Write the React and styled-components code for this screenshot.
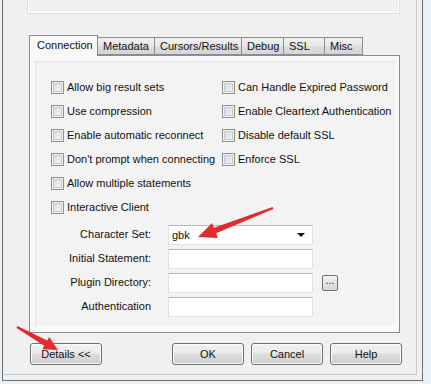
import React from 'react'
import styled, { createGlobalStyle } from 'styled-components'

const Global = createGlobalStyle`
  html, body {
    margin: 0;
    padding: 0;
    background: #e7f3f8;
  }
  body {
    font-family: "Liberation Sans", Arial, sans-serif;
    font-size: 11px;
    color: #111;
  }
`

const leftChecks = [
  'Allow big result sets',
  'Use compression',
  'Enable automatic reconnect',
  "Don't prompt when connecting",
  'Allow multiple statements',
  'Interactive Client',
]

const rightChecks = [
  'Can Handle Expired Password',
  'Enable Cleartext Authentication',
  'Disable default SSL',
  'Enforce SSL',
]

const tabs = [
  { name: 'Connection', width: 69 },
  { name: 'Metadata', width: 57 },
  { name: 'Cursors/Results', width: 88 },
  { name: 'Debug', width: 43 },
  { name: 'SSL', width: 42 },
  { name: 'Misc', width: 39 },
]

const Arrow = ({ points }) => <polygon points={points} fill="#e42b2b" />

export default function App() {
  return (
    <Page>
      <Global />
      <Window>
        <Client>
          <TopGroup />
          <Tabs>
            <TabRow>
              {tabs.map((t, i) => (
                <Tab key={t.name} active={i === 0} w={t.width}>{t.name}</Tab>
              ))}
            </TabRow>
            <Panel>
              <Inner>
                <Checks>
                  <CheckCol>
                    {leftChecks.map(c => (
                      <Check key={c}><Box />{c}</Check>
                    ))}
                  </CheckCol>
                  <CheckCol>
                    {rightChecks.map(c => (
                      <Check key={c}><Box />{c}</Check>
                    ))}
                  </CheckCol>
                </Checks>
                <Form>
                  <Label>Character Set:</Label>
                  <Field>
                    gbk
                    <Caret />
                  </Field>
                  <span />
                  <Label>Initial Statement:</Label>
                  <Field />
                  <span />
                  <Label>Plugin Directory:</Label>
                  <Field />
                  <Browse>...</Browse>
                  <Label>Authentication</Label>
                  <Field />
                  <span />
                </Form>
              </Inner>
            </Panel>
          </Tabs>
          <Buttons>
            <Button>Details &lt;&lt;</Button>
            <ButtonGroup>
              <Button>OK</Button>
              <Button>Cancel</Button>
              <Button>Help</Button>
            </ButtonGroup>
          </Buttons>
        </Client>
      </Window>
      <Overlay width="431" height="384" viewBox="0 0 431 384">
        <Arrow points="272.6,207.1 213.9,227.7 212.1,223 198,237 217.9,238 216.1,233.3 273.4,208.9" />
        <Arrow points="17.5,326.1 47.3,340.5 49.2,337 58,350 42.4,349.2 44.3,345.7 16.5,327.9" />
      </Overlay>
    </Page>
  )
}

const Page = styled.div`
  position: relative;
  width: 431px;
  height: 384px;
  overflow: hidden;
`

const Window = styled.div`
  margin-left: 2px;
  width: 421px;
  height: 381px;
  background: #f0f0f0;
  border: 1px solid #6e6e6e;
  border-top: none;
  box-sizing: border-box;
  padding: 0 5px 5px 0;
`

const Client = styled.div`
  height: 100%;
  border-right: 1px solid #c9cdd2;
  border-bottom: 1px solid #c9cdd2;
  box-sizing: border-box;
`

const TopGroup = styled.div`
  margin-left: 24px;
  width: 373px;
  height: 14px;
  box-sizing: border-box;
  border: 1px solid #d5dfe5;
  border-top: none;
  box-shadow: inset 1px 0 0 #fff, inset -1px -1px 0 #fff;
`

const Tabs = styled.div`
  margin: 21px 0 0 26px;
  width: 371px;
`

const TabRow = styled.div`
  display: flex;
  align-items: flex-end;
  height: 20px;
  position: relative;
  z-index: 1;
`

const Tab = styled.div`
  width: ${p => p.w}px;
  box-sizing: border-box;
  height: ${p => (p.active ? 21 : 18)}px;
  margin-bottom: ${p => (p.active ? -1 : 0)}px;
  padding: ${p => (p.active ? '3px 0 0 7px' : '2px 0 0 5px')};
  border: 1px solid #898c95;
  border-bottom: ${p => (p.active ? 'none' : '1px solid #898c95')};
  margin-left: ${p => (p.active ? 0 : -1)}px;
  background: ${p => (p.active ? '#f8f8f8' : 'linear-gradient(#f0f0f0, #e8e8e8 50%, #dddddd 51%, #d6d6d6)')};
  white-space: nowrap;
  &:nth-child(2) { margin-left: 0; border-left: none; }
`

const Panel = styled.div`
  height: 278px;
  box-sizing: border-box;
  border: 1px solid #898c95;
  background: #f8f8f8;
  padding: 5px 2px 5px 5px;
`

const Inner = styled.div`
  height: 100%;
  box-sizing: border-box;
  border: 1px solid #e4e4e4;
  border-right-color: #fff;
  border-bottom-color: #fff;
  background: #f3f3f3;
  padding: 13px 0 0 15px;
`

const Checks = styled.div`
  display: flex;
`

const CheckCol = styled.div`
  display: flex;
  flex-direction: column;
  &:first-child { width: 171px; }
`

const Check = styled.label`
  display: flex;
  align-items: center;
  gap: 3px;
  height: 24px;
  white-space: nowrap;
`

const Box = styled.span`
  width: 13px;
  height: 13px;
  box-sizing: border-box;
  border: 1px solid #8e8f8f;
  background: linear-gradient(135deg, #d8d8d8, #f6f6f6);
  box-shadow: inset 0 0 0 1px #f4f4f4, inset 0 0 0 2px #c6c8cc;
  flex: none;
`

const Form = styled.div`
  margin-top: 6px;
  display: grid;
  grid-template-columns: 100px 145px 16px;
  grid-auto-rows: 20px;
  column-gap: 17px;
  row-gap: 4px;
  align-items: center;
  & > :nth-child(3n) { margin-left: -8px; }
`

const Label = styled.div`
  text-align: right;
  margin-top: -3px;
`

const Field = styled.div`
  position: relative;
  height: 20px;
  box-sizing: border-box;
  background: #fff;
  border: 1px solid #dde1e6;
  border-top-color: #b5b8bf;
  padding: 3px 0 0 3px;
`

const Caret = styled.span`
  position: absolute;
  right: 7px;
  top: 7px;
  border-left: 4px solid transparent;
  border-right: 4px solid transparent;
  border-top: 4px solid #111;
`

const Browse = styled.div`
  width: 16px;
  height: 16px;
  box-sizing: border-box;
  border: 1px solid #707070;
  border-radius: 2px;
  background: linear-gradient(#f4f4f4, #e4e4e4 50%, #d8d8d8);
  font-size: 10px;
  line-height: 10px;
  text-align: center;
`

const Buttons = styled.div`
  display: flex;
  justify-content: space-between;
  margin: 10px 0 0 27px;
  width: 372px;
`

const ButtonGroup = styled.div`
  display: flex;
  gap: 7px;
`

const Button = styled.div`
  width: 72px;
  height: 22px;
  box-sizing: border-box;
  border: 1px solid #707070;
  border-radius: 3px;
  background: linear-gradient(#f2f2f2, #ebebeb 45%, #dddddd 50%, #cfcfcf);
  box-shadow: inset 0 0 0 1px #fcfcfc;
  display: flex;
  align-items: center;
  justify-content: center;
`

const Overlay = styled.svg`
  position: absolute;
  left: 0;
  top: 0;
  pointer-events: none;
`
